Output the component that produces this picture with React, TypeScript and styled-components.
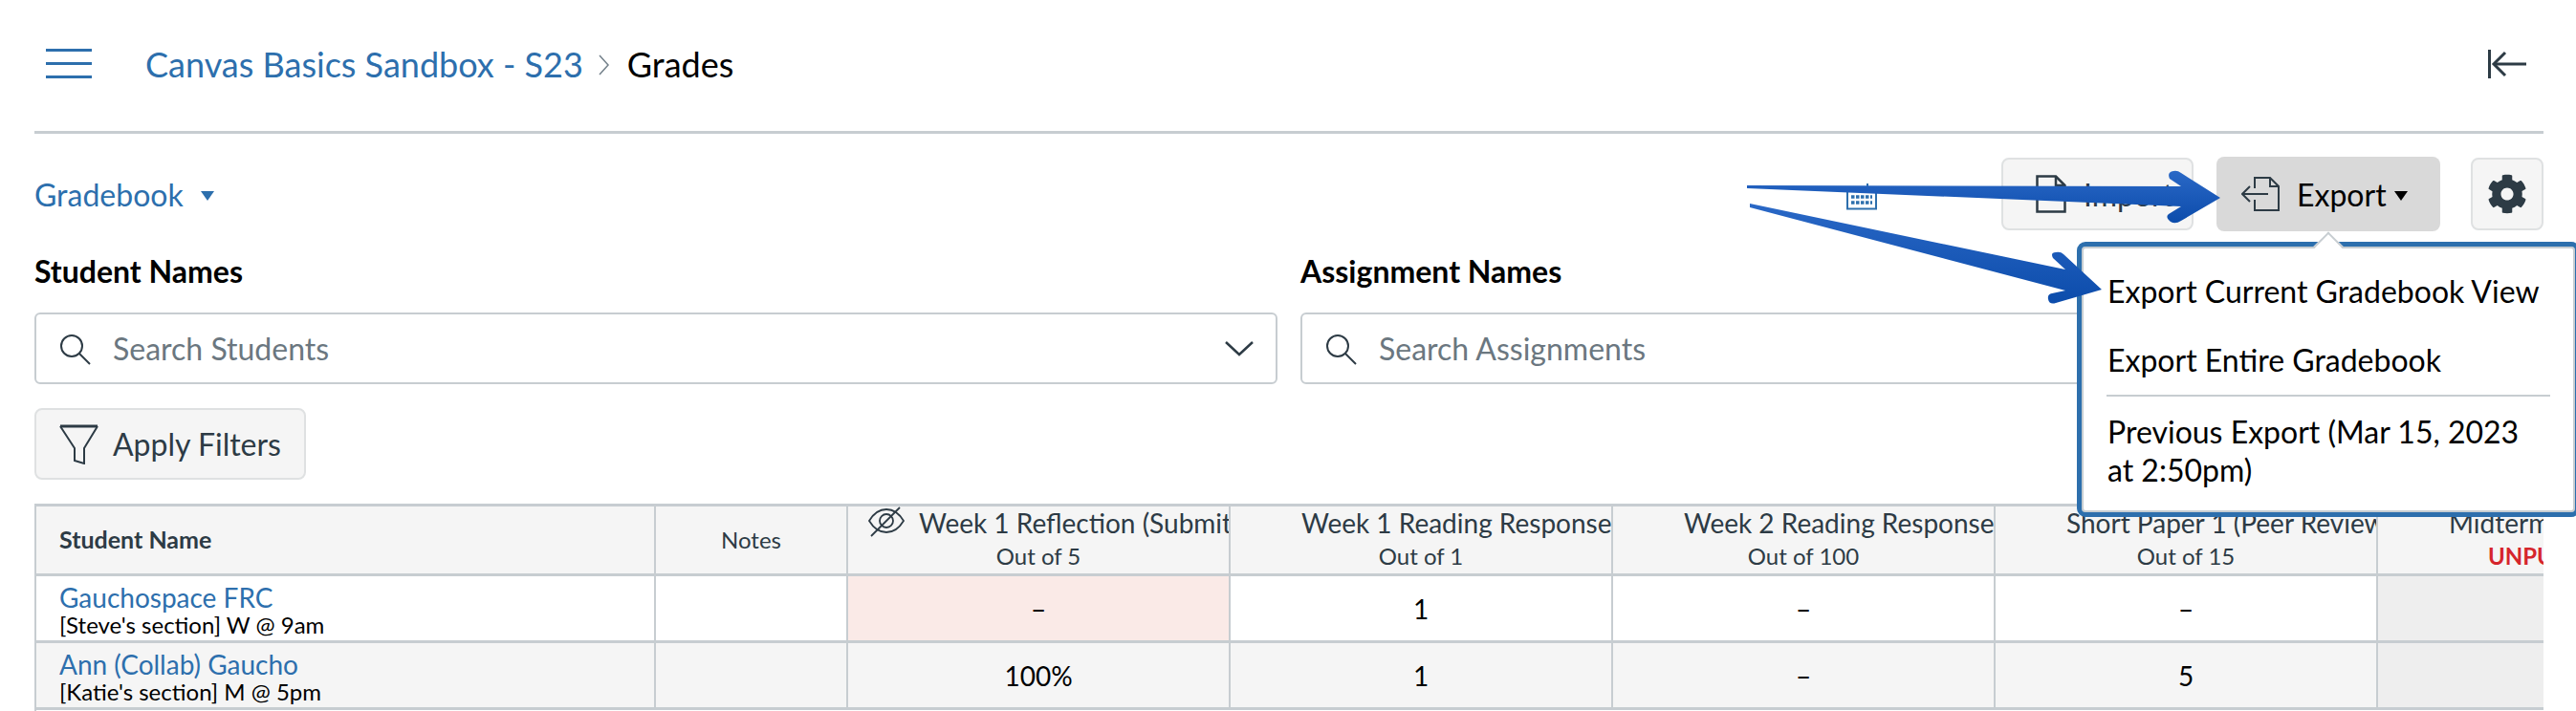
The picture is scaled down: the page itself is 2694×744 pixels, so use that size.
import { FaCog } from 'react-icons/fa'
import styled, { createGlobalStyle } from 'styled-components'

const GlobalStyle = createGlobalStyle`
  html, body {
    margin: 0;
    height: 744px;
    overflow: hidden;
    background: #fff;
  }
  body {
    font-family: Lato, 'Open Sans', sans-serif;
    color: #000;
  }
  * {
    box-sizing: border-box;
  }
`

const LINK = '#2d6fad'
const INK = '#2d3b45'
const LINE = '#c7cdd1'

const columns = [
  { title: 'Week 1 Reflection (Submit for Grade)', sub: 'Out of 5', muted: true },
  { title: 'Week 1 Reading Response (Quiz)', sub: 'Out of 1' },
  { title: 'Week 2 Reading Response (Quiz)', sub: 'Out of 100' },
  { title: 'Short Paper 1 (Peer Review Draft)', sub: 'Out of 15' },
  { title: 'Midterm Exam Review', sub: 'UNPUBLISHED', unpublished: true },
]

const rows = [
  {
    name: 'Gauchospace FRC',
    section: "[Steve's section] W @ 9am",
    grades: ['–', '1', '–', '–', ''],
  },
  {
    name: 'Ann (Collab) Gaucho',
    section: "[Katie's section] M @ 5pm",
    grades: ['100%', '1', '–', '5', ''],
  },
]

const HamburgerIcon = () => (
  <svg width="48" height="32" viewBox="0 0 48 32" fill={LINK}>
    <rect y="0" width="48" height="3" />
    <rect y="14" width="48" height="3" />
    <rect y="28" width="48" height="3" />
  </svg>
)

const CollapseIcon = () => (
  <svg width="40" height="30" viewBox="0 0 40 30" fill="none" stroke={INK} strokeWidth="3">
    <path d="M1.500 0V30" />
    <path d="M18 3L6 15L18 27" />
    <path d="M6 15H40" />
  </svg>
)

const SearchIcon = () => (
  <svg width="34" height="34" viewBox="0 0 34 34" fill="none" stroke={INK} strokeWidth="2">
    <circle cx="14" cy="14" r="11" />
    <path d="M22 22L33 33" />
  </svg>
)

const ChevronIcon = () => (
  <svg width="30" height="16" viewBox="0 0 30 16" fill="none" stroke={INK} strokeWidth="2.500">
    <path d="M1 1L15 14L29 1" />
  </svg>
)

const FilterIcon = () => (
  <svg width="42" height="42" viewBox="0 0 42 42" fill="none" stroke={INK} strokeWidth="2">
    <path d="M1 2H40" strokeWidth="3" />
    <path d="M1 2L16 25V38L26 41V25L40 2" />
  </svg>
)

const ImportIcon = () => (
  <svg width="32" height="40" viewBox="0 0 32 40" fill="none" stroke={INK} strokeWidth="2.500">
    <path d="M1.500 1.500H21L30.500 11V38.500H1.500Z" />
    <path d="M21 1.500V11H30.500" />
  </svg>
)

const ExportIcon = () => (
  <svg width="40" height="36" viewBox="0 0 40 36" fill="none" stroke={INK} strokeWidth="2">
    <path d="M14 12V1H30L39 10V35H14V24" />
    <path d="M30 1V10H39" />
    <path d="M9 10L1 18L9 26" />
    <path d="M1 18H28" />
  </svg>
)

const HiddenIcon = () => (
  <svg width="38" height="32" viewBox="0 0 38 32" fill="none" stroke={INK} strokeWidth="1.800">
    <path d="M1 15C7 5 14 3 19 3C24 3 31 5 37 15C31 25 24 27 19 27C14 27 7 25 1 15Z" />
    <circle cx="19" cy="15" r="7" />
    <path d="M33 1L3 31" />
  </svg>
)

const CalendarIcon = () => (
  <svg width="32" height="28" viewBox="0 0 32 28" fill="none">
    <path d="M22 0V4" stroke={LINK} strokeWidth="2" />
    <path d="M1 4H31V26.500H1Z" stroke={LINK} strokeWidth="2" />
    <path d="M5 14H27M5 20H27" stroke={LINK} strokeWidth="3.500" strokeDasharray="3.500 1.500" />
  </svg>
)

const ArrowOverlay = () => (
  <ArrowSvg viewBox="0 0 2694 744" width="2694" height="744">
    <defs>
      <linearGradient id="arrowBlue" x1="0" y1="0" x2="0" y2="1">
        <stop offset="0" stopColor="#2a68c6" />
        <stop offset="1" stopColor="#0c4cab" />
      </linearGradient>
    </defs>
    <path
      d="M1827 194L2281 195L2269 187Q2266 180 2273 179Q2277 178 2281 181L2322 207L2281 231Q2275 235 2270 232Q2264 227 2268 224L2281 216L1827 197Z"
      fill="url(#arrowBlue)"
    />
    <path
      d="M1830 213L2160 282L2147 270Q2144 264 2150 264Q2155 263 2158 266L2198 303L2150 317Q2143 319 2142 313Q2141 308 2146 307L2160 304L1830 217Z"
      fill="url(#arrowBlue)"
    />
  </ArrowSvg>
)

export default function App() {
  return (
    <>
      <GlobalStyle />
      <Page>
        <Header>
          <HamburgerIcon />
          <Crumbs>
            <CrumbLink>Canvas Basics Sandbox - S23</CrumbLink>
            <CrumbSeparator>
              <svg width="12" height="24" viewBox="0 0 12 24" fill="none" stroke="#73808a" strokeWidth="1.500">
                <path d="M1 2L10 12L1 22" />
              </svg>
            </CrumbSeparator>
            <CrumbCurrent>Grades</CrumbCurrent>
          </Crumbs>
          <HeaderEnd>
            <CollapseIcon />
          </HeaderEnd>
        </Header>

        <Toolbar>
          <GradebookMenu>
            Gradebook <Caret $color={LINK} />
          </GradebookMenu>
          <ToolbarEnd>
            <CalendarSlot>
              <CalendarIcon />
            </CalendarSlot>
            <ToolButton $width={201}>
              <ImportIcon />
              Import
            </ToolButton>
            <ExportButton>
              <ExportIcon />
              Export <Caret $color="#000" $small />
            </ExportButton>
            <GearButton>
              <FaCog size={42} color={INK} />
            </GearButton>
          </ToolbarEnd>
        </Toolbar>

        <Filters>
          <FilterField>
            <FieldLabel>Student Names</FieldLabel>
            <SearchBox>
              <SearchIcon />
              <Placeholder>Search Students</Placeholder>
              <ChevronSlot>
                <ChevronIcon />
              </ChevronSlot>
            </SearchBox>
          </FilterField>
          <FilterField>
            <FieldLabel>Assignment Names</FieldLabel>
            <SearchBox>
              <SearchIcon />
              <Placeholder>Search Assignments</Placeholder>
            </SearchBox>
          </FilterField>
        </Filters>

        <ApplyButton>
          <FilterIcon />
          Apply Filters
        </ApplyButton>

        <Grid>
          <HeadCell $bold>Student Name</HeadCell>
          <HeadCell $center>Notes</HeadCell>
          {columns.map((column) => (
            <ColumnHead key={column.title}>
              {column.muted && (
                <HiddenSlot>
                  <HiddenIcon />
                </HiddenSlot>
              )}
              <ColumnTitle>{column.title}</ColumnTitle>
              <ColumnSub $alert={column.unpublished}>{column.sub}</ColumnSub>
            </ColumnHead>
          ))}
          {rows.map((row, rowIndex) => (
            <GridRow key={row.name}>
              <NameCell $odd={rowIndex === 1}>
                <StudentLink>{row.name}</StudentLink>
                <StudentSection>{row.section}</StudentSection>
              </NameCell>
              <GradeCell $odd={rowIndex === 1} />
              {row.grades.map((grade, i) => (
                <GradeCell
                  key={i}
                  $odd={rowIndex === 1}
                  $tint={rowIndex === 0 && i === 0 ? '#faeae7' : i === 4 ? '#eeeeee' : undefined}
                >
                  {grade}
                </GradeCell>
              ))}
            </GridRow>
          ))}
        </Grid>

        <ExportMenu>
          <MenuNotch />
          <MenuItem>Export Current Gradebook View</MenuItem>
          <MenuItem>Export Entire Gradebook</MenuItem>
          <MenuDivider />
          <MenuItem $tight>Previous Export (Mar 15, 2023 at 2:50pm)</MenuItem>
        </ExportMenu>

        <ArrowOverlay />
      </Page>
    </>
  )
}

const Page = styled.div`
  position: relative;
  width: 2694px;
  height: 744px;
  overflow: hidden;
  padding: 0 34px 0 36px;
`

const ArrowSvg = styled.svg`
  position: absolute;
  top: 0;
  left: 0;
  pointer-events: none;
`

const Header = styled.header`
  display: flex;
  align-items: center;
  height: 140px;
  padding-left: 12px;
  padding-bottom: 4px;
  border-bottom: 3px solid ${LINE};
`

const Crumbs = styled.nav`
  display: flex;
  align-items: center;
  margin-left: 56px;
  font-size: 36px;
`

const CrumbLink = styled.span`
  color: ${LINK};
`

const CrumbSeparator = styled.span`
  display: flex;
  margin: 2px 18px 0 16px;
`

const CrumbCurrent = styled.span`
  color: #000;
`

const HeaderEnd = styled.div`
  display: flex;
  margin-left: auto;
  padding-right: 18px;
`

const Toolbar = styled.div`
  display: flex;
  align-items: center;
  justify-content: space-between;
  height: 78px;
  margin-top: 24px;
`

const GradebookMenu = styled.div`
  display: flex;
  align-items: center;
  gap: 18px;
  font-size: 32px;
  color: ${LINK};
`

const Caret = styled.span<{ $color: string; $small?: boolean }>`
  display: inline-block;
  width: 0;
  height: 0;
  margin-top: 4px;
  margin-left: ${(p) => (p.$small ? -10 : 0)}px;
  border-left: 7px solid transparent;
  border-right: 7px solid transparent;
  border-top: 10px solid ${(p) => p.$color};
`

const ToolbarEnd = styled.div`
  display: flex;
  align-items: center;
`

const CalendarSlot = styled.div`
  display: flex;
  margin: 6px 130px 0 0;
`

const ToolButton = styled.div<{ $width: number }>`
  display: flex;
  align-items: center;
  gap: 18px;
  width: ${(p) => p.$width}px;
  height: 76px;
  padding-left: 34px;
  font-size: 32px;
  color: ${INK};
  background: #f5f5f5;
  border: 2px solid #dfe1e2;
  border-radius: 8px;
`

const ExportButton = styled.div`
  display: flex;
  align-items: center;
  gap: 18px;
  width: 234px;
  height: 78px;
  margin-left: 24px;
  padding-left: 26px;
  font-size: 32px;
  color: #000;
  background: #d9d9d9;
  border-radius: 8px;
`

const GearButton = styled.div`
  display: flex;
  align-items: center;
  justify-content: center;
  width: 76px;
  height: 76px;
  margin-left: 32px;
  background: #f5f5f5;
  border: 2px solid #dfe1e2;
  border-radius: 8px;
`

const Filters = styled.div`
  display: grid;
  grid-template-columns: 1300px 1fr;
  column-gap: 24px;
  margin-top: 22px;
`

const FilterField = styled.div`
  display: flex;
  flex-direction: column;
  gap: 23px;
`

const FieldLabel = styled.div`
  font-size: 32px;
  font-weight: 700;
  line-height: 40px;
`

const SearchBox = styled.div`
  display: flex;
  align-items: center;
  gap: 23px;
  height: 75px;
  padding: 0 23px;
  background: #fff;
  border: 2px solid ${LINE};
  border-radius: 6px;
`

const Placeholder = styled.span`
  font-size: 32px;
  color: #6b7780;
`

const ChevronSlot = styled.span`
  display: flex;
  margin-left: auto;
`

const ApplyButton = styled.div`
  display: flex;
  align-items: center;
  gap: 14px;
  width: 284px;
  height: 75px;
  margin-top: 25px;
  padding-left: 24px;
  font-size: 32px;
  color: ${INK};
  background: #f5f5f5;
  border: 2px solid #dfe1e2;
  border-radius: 8px;
`

const Grid = styled.div`
  display: grid;
  grid-template-columns: 648px 201px repeat(5, 400px);
  grid-template-rows: 73px 70px 70px 10px;
  width: 2624px;
  height: 226px;
  margin-top: 25px;
  overflow: hidden;
  border-top: 3px solid ${LINE};
  border-left: 2px solid ${LINE};
`

const HeadCell = styled.div<{ $bold?: boolean; $center?: boolean }>`
  display: flex;
  align-items: center;
  justify-content: ${(p) => (p.$center ? 'center' : 'flex-start')};
  padding: 0 0 2px ${(p) => (p.$center ? 0 : 24)}px;
  font-size: ${(p) => (p.$bold ? 25 : 24)}px;
  font-weight: ${(p) => (p.$bold ? 700 : 400)};
  color: ${INK};
  background: #f5f5f5;
  border-right: 2px solid ${LINE};
  border-bottom: 3px solid ${LINE};
`

const ColumnHead = styled.div`
  position: relative;
  display: flex;
  flex-direction: column;
  min-width: 0;
  overflow: hidden;
  background: #f5f5f5;
  border-right: 2px solid ${LINE};
  border-bottom: 3px solid ${LINE};
`

const HiddenSlot = styled.span`
  position: absolute;
  top: 0;
  left: 21px;
  display: flex;
`

const ColumnTitle = styled.div`
  margin-top: -1px;
  padding-left: 74px;
  font-size: 28px;
  line-height: 36px;
  white-space: nowrap;
  color: ${INK};
`

const ColumnSub = styled.div<{ $alert?: boolean }>`
  margin-top: 2px;
  font-size: 24px;
  line-height: 30px;
  text-align: center;
  white-space: nowrap;
  font-weight: ${(p) => (p.$alert ? 700 : 400)};
  color: ${(p) => (p.$alert ? '#d5252c' : INK)};
`

const GridRow = styled.div`
  display: contents;
`

const NameCell = styled.div<{ $odd: boolean }>`
  display: flex;
  flex-direction: column;
  justify-content: center;
  padding: 2px 0 0 24px;
  background: ${(p) => (p.$odd ? '#f5f5f5' : '#fff')};
  border-right: 2px solid ${LINE};
  border-bottom: 3px solid ${LINE};
`

const StudentLink = styled.span`
  font-size: 28px;
  line-height: 32px;
  color: ${LINK};
`

const StudentSection = styled.span`
  font-size: 24px;
  line-height: 26px;
  color: #000;
`

const GradeCell = styled.div<{ $odd: boolean; $tint?: string }>`
  display: flex;
  align-items: center;
  justify-content: center;
  font-size: 28px;
  color: #000;
  background: ${(p) => (p.$odd ? '#f5f5f5' : '#fff')};
  border-right: 2px solid ${LINE};
  border-bottom: 3px solid ${LINE};
  box-shadow: inset 0 0 0 200px ${(p) => p.$tint ?? 'transparent'};
`

const ExportMenu = styled.div`
  position: absolute;
  top: 258px;
  left: 2177px;
  width: 516px;
  height: 278px;
  padding: 9px 0 0 25px;
  background: #fff;
  border: 2px solid ${LINE};
  border-radius: 4px;
  outline: 5px solid ${LINK};
`

const MenuNotch = styled.span`
  position: absolute;
  top: -13px;
  left: 245px;
  width: 22px;
  height: 22px;
  background: #fff;
  border-top: 2px solid ${LINE};
  border-left: 2px solid ${LINE};
  transform: rotate(45deg);
`

const MenuItem = styled.div<{ $tight?: boolean }>`
  width: 460px;
  padding: ${(p) => (p.$tight ? '17px 0 0' : '16px 0')};
  font-size: 32px;
  line-height: 40px;
  color: #000;
`

const MenuDivider = styled.div`
  width: 464px;
  margin-left: -1px;
  border-top: 2px solid ${LINE};
`
